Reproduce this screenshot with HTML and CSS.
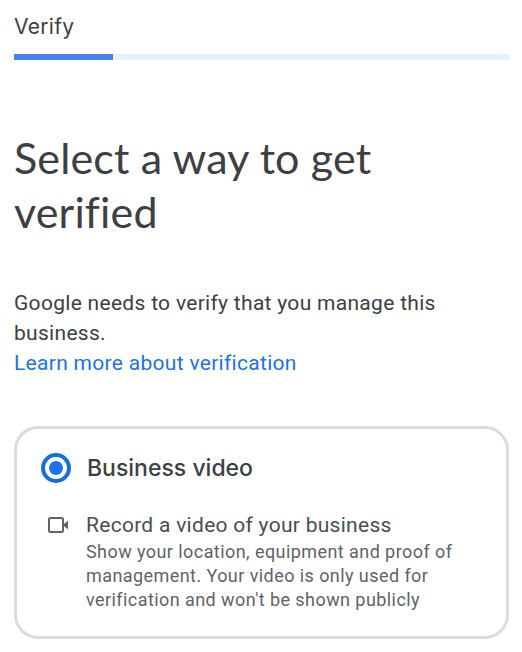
FILE: index.html
```html
<!DOCTYPE html>
<html lang="en">
<head>
    <meta charset="UTF-8">
    <title>Verify</title>
    <link rel="stylesheet" href="styles.css">
</head>
<body>
    <div class="page">
        <div class="step-title">Verify</div>
        <div class="progress"><div class="progress-fill"></div></div>
        <h1 class="title">Select a way to get verified</h1>
        <p class="intro">Google needs to verify that you manage this business.<br><a class="link" href="#">Learn more about verification</a></p>
        <div class="card">
            <div class="option">
                <span class="radio"><span class="radio-dot"></span></span>
                <span class="option-name">Business video</span>
            </div>
            <div class="detail">
                <svg class="video-icon" width="22" height="18" viewBox="0 0 22 18">
                    <rect x="2" y="2" width="14" height="14" rx="1.5" fill="none" stroke="#5f6368" stroke-width="2"/>
                    <path d="M17 8 L21 4.5 V13.5 L17 10 Z" fill="#5f6368"/>
                </svg>
                <div class="detail-text">
                    <div class="detail-title">Record a video of your business</div>
                    <div class="detail-desc">Show your location, equipment and proof of management. Your video is only used for verification and won't be shown publicly</div>
                </div>
            </div>
        </div>
    </div>
</body>
</html>
```

FILE: styles.css
```css
body {
    margin: 0;
    background: #fff;
    color: #3c4043;
    font-family: Roboto, Arial, sans-serif;
}

.page {
    padding: 14px 13px 0 14px;
}

.step-title {
    font-family: Inter, Arial, sans-serif;
    font-size: 21px;
    letter-spacing: 0.3px;
    line-height: 26px;
}

.progress {
    height: 6px;
    margin-top: 14px;
    background: #e8f0fe;
}

.progress-fill {
    width: 99px;
    height: 6px;
    background: #4285e6;
}

.title {
    margin: 71px 0 0;
    font-family: Lato, Arial, sans-serif;
    font-size: 43px;
    font-weight: 400;
    letter-spacing: 0.15px;
    line-height: 54px;
}

.intro {
    margin: 49px 0 0;
    font-size: 21px;
    letter-spacing: 0.3px;
    line-height: 30px;
}

.link {
    color: #1a73e8;
    text-decoration: none;
}

.card {
    margin-top: 48px;
    height: 207px;
    border: 3px solid #dadce0;
    border-radius: 24px;
    padding: 0 24px;
}

.option {
    display: flex;
    align-items: center;
    gap: 16px;
    margin-top: 24px;
}

.radio {
    display: flex;
    align-items: center;
    justify-content: center;
    box-sizing: border-box;
    width: 30px;
    height: 30px;
    border: 4px solid #1a6dd6;
    border-radius: 50%;
}

.radio-dot {
    width: 14px;
    height: 14px;
    border-radius: 50%;
    background: #1a73e8;
}

.option-name {
    font-family: Inter, Arial, sans-serif;
    font-size: 23px;
    font-weight: 500;
}

.detail {
    display: flex;
    align-items: flex-start;
    gap: 17px;
    margin-top: 28px;
    padding-left: 6px;
}

.video-icon {
    flex: none;
    margin-top: 5px;
}

.detail-title {
    font-size: 21px;
    letter-spacing: 0.28px;
    line-height: 29px;
    color: #4a4e52;
}

.detail-desc {
    font-size: 18px;
    letter-spacing: 0.43px;
    line-height: 24px;
    color: #5f6368;
}
```
